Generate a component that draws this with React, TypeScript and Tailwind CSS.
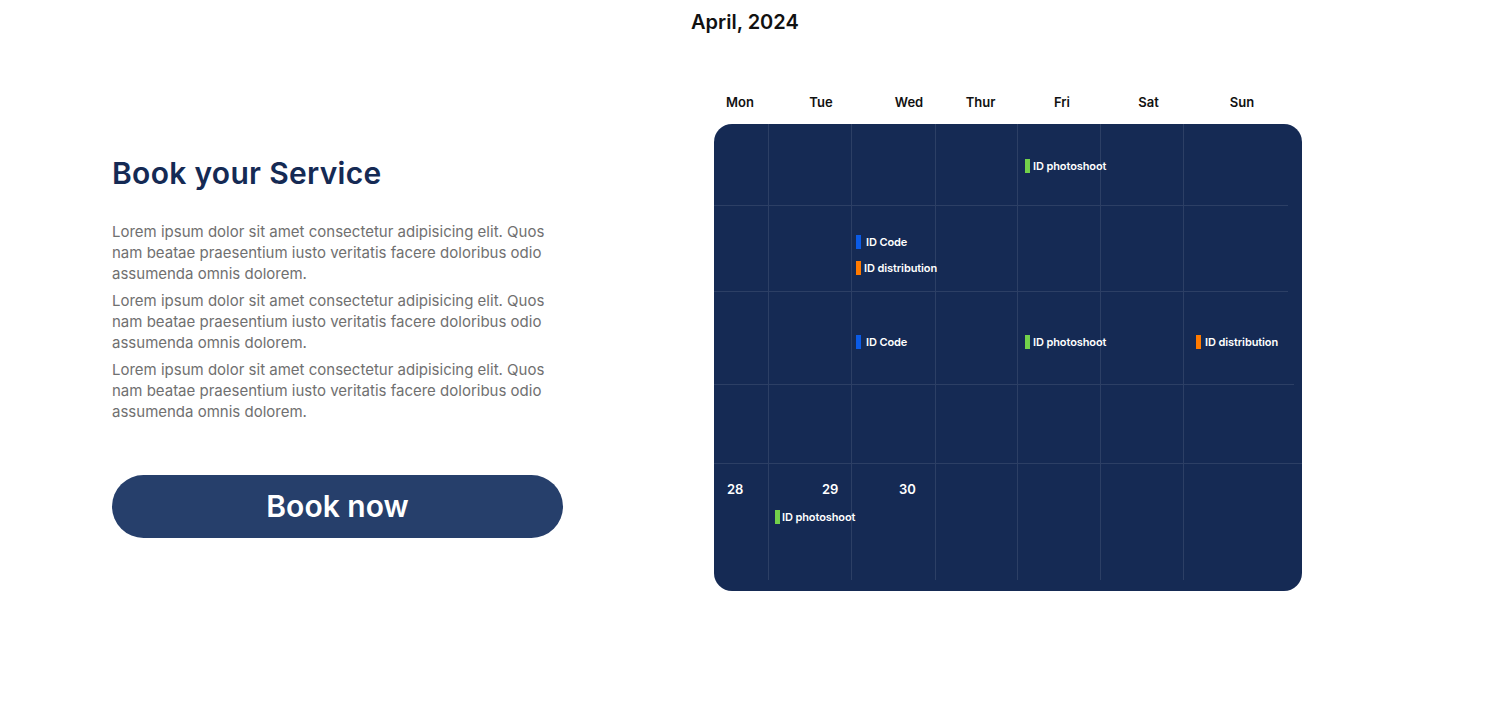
import React from "react";

type Ev = { label: string; color: string; gap?: string };

const COLORS = {
  blue: "bg-[#0b5be6]",
  orange: "bg-[#ff7a00]",
  green: "bg-[#72d14a]",
};

const days = ["Mon", "Tue", "Wed", "Thur", "Fri", "Sat", "Sun"];

const paragraph = [
  "Lorem ipsum dolor sit amet consectetur adipisicing elit. Quos",
  "nam beatae praesentium iusto veritatis facere doloribus odio",
  "assumenda omnis dolorem.",
];

function EventTag({ label, color, gap = "gap-[5px]" }: Ev) {
  return (
    <div className={`flex items-center ${gap}`}>
      <span className={`block shrink-0 w-[5px] h-[14px] ${color}`} />
      <span className="text-[11px] font-semibold leading-[14px] text-white tracking-[-0.1px] whitespace-nowrap">
        {label}
      </span>
    </div>
  );
}

function Cell({
  last,
  className = "",
  children,
}: {
  last?: boolean;
  className?: string;
  children?: React.ReactNode;
}) {
  return (
    <div className={`h-full min-w-0 ${last ? "" : "border-r border-white/10"} ${className}`}>
      {children}
    </div>
  );
}

const cols = "grid grid-cols-[55px_83px_84px_82px_83px_83px_118px]";

function Calendar() {
  return (
    <div className="flex flex-col">
      <h2 className="text-[20px] font-semibold leading-7 text-[#111] mt-2">April, 2024</h2>

      <div className="ml-[23px] mt-[56px] grid grid-cols-[52px_110px_66px_77px_86px_87px_100px] text-[13px] font-semibold leading-5 text-[#111]">
        {days.map((d) => (
          <span key={d} className="text-center">
            {d}
          </span>
        ))}
      </div>

      <div className="ml-[23px] mt-[12px] w-[588px] h-[467px] rounded-[18px] bg-[#152a54] overflow-hidden flex flex-col">
        {/* week 1 */}
        <div className={`${cols} h-[81px]`}>
          <Cell />
          <Cell />
          <Cell />
          <Cell />
          <Cell className="pl-[7px] pt-[35px]">
            <EventTag label="ID photoshoot" color={COLORS.green} gap="gap-[3px]" />
          </Cell>
          <Cell />
          <Cell last />
        </div>
        <div className="h-px w-[574px] bg-white/10" />

        {/* week 2 */}
        <div className={`${cols} h-[85px]`}>
          <Cell />
          <Cell />
          <Cell className="pl-[4px] pt-[29px] flex flex-col gap-[12px]">
            <EventTag label="ID Code" color={COLORS.blue} />
            <EventTag label="ID distribution" color={COLORS.orange} gap="gap-[3px]" />
          </Cell>
          <Cell />
          <Cell />
          <Cell />
          <Cell last />
        </div>
        <div className="h-px w-[574px] bg-white/10" />

        {/* week 3 */}
        <div className={`${cols} h-[92px]`}>
          <Cell />
          <Cell />
          <Cell className="pl-[4px] pt-[43px]">
            <EventTag label="ID Code" color={COLORS.blue} />
          </Cell>
          <Cell />
          <Cell className="pl-[7px] pt-[43px]">
            <EventTag label="ID photoshoot" color={COLORS.green} gap="gap-[3px]" />
          </Cell>
          <Cell />
          <Cell last className="pl-[12px] pt-[43px]">
            <EventTag label="ID distribution" color={COLORS.orange} gap="gap-[4px]" />
          </Cell>
        </div>
        <div className="h-px w-[580px] bg-white/10" />

        {/* week 4 */}
        <div className={`${cols} h-[78px]`}>
          <Cell />
          <Cell />
          <Cell />
          <Cell />
          <Cell />
          <Cell />
          <Cell last />
        </div>
        <div className="h-px w-full bg-white/10" />

        {/* week 5 */}
        <div className={`${cols} h-[116px] text-[13px] font-semibold leading-5 text-white`}>
          <Cell className="pl-[13px] pt-[15px]">28</Cell>
          <Cell className="pt-[15px] flex flex-col">
            <span className="pl-[53px]">29</span>
            <div className="pl-[6px] mt-[11px]">
              <EventTag label="ID photoshoot" color={COLORS.green} gap="gap-[2px]" />
            </div>
          </Cell>
          <Cell className="pl-[47px] pt-[15px]">30</Cell>
          <Cell />
          <Cell />
          <Cell />
          <Cell last />
        </div>
      </div>
    </div>
  );
}

export default function App() {
  return (
    <div
      className="min-h-screen bg-white flex items-start"
      style={{ fontFamily: "Inter, 'Noto Sans', sans-serif" }}
    >
      <section className="pl-[112px] pt-[155px] w-[563px] shrink-0">
        <h1 className="text-[30px] font-semibold leading-9 text-[#152a54] tracking-[0.3px]">
          Book your Service
        </h1>

        <div className="mt-[30px] flex flex-col gap-[6px]">
          {[0, 1, 2].map((i) => (
            <p
              key={i}
              className="text-[15px] leading-[21px] text-[#707070] whitespace-nowrap"
            >
              {paragraph.map((line, j) => (
                <React.Fragment key={j}>
                  {line}
                  {j < paragraph.length - 1 && <br />}
                </React.Fragment>
              ))}
            </p>
          ))}
        </div>

        <button className="mt-[53px] w-[451px] h-[63px] rounded-full bg-[#263f6b] text-white text-[30px] font-semibold">
          Book now
        </button>
      </section>

      <section className="ml-[128px]">
        <Calendar />
      </section>
    </div>
  );
}
